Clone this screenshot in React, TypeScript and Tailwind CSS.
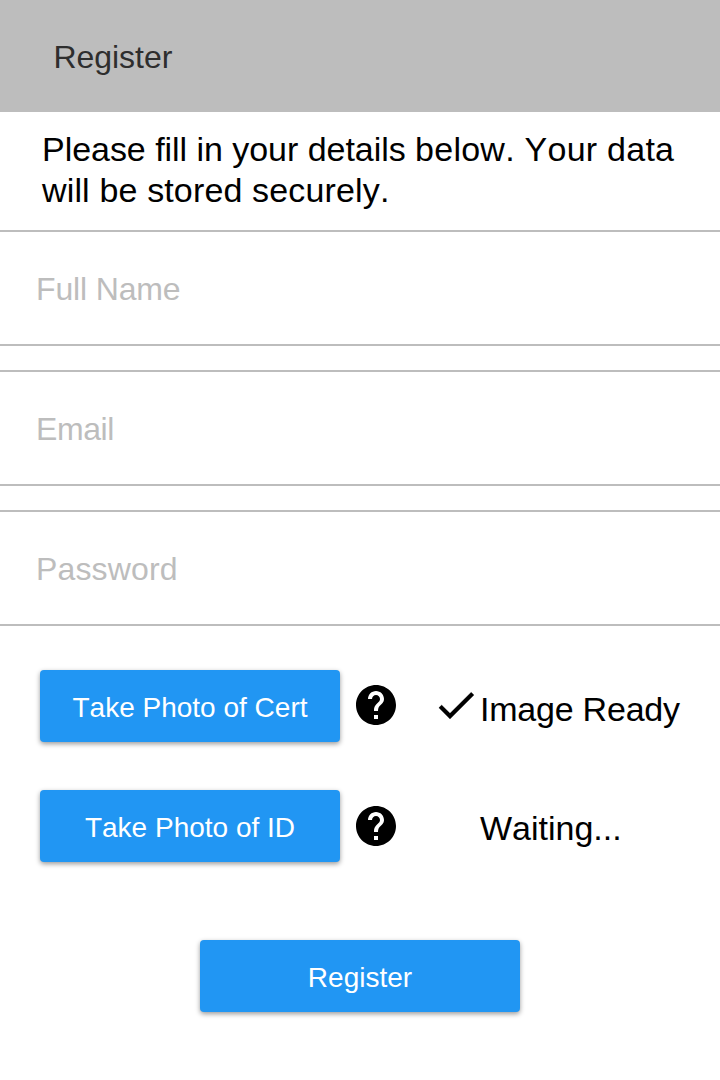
import React from "react";
import { MdHelp } from "react-icons/md";

function Field({ label, type, className }: { label: string; type: string; className: string }) {
  return (
    <input
      type={type}
      placeholder={label}
      className={`h-[116px] w-full border-y-2 border-[#bdbdbd] px-9 pt-0.5 text-[32px] placeholder:text-[#bdbdbd] outline-none ${className}`}
    />
  );
}

function Action({ label, className }: { label: string; className: string }) {
  return (
    <button className={`flex h-[72px] items-center justify-center rounded bg-[#2196f3] pt-1 text-[28px] whitespace-nowrap text-white shadow-[0_2px_5px_rgba(0,0,0,0.4)] ${className}`}>
      {label}
    </button>
  );
}

function Check({ className }: { className: string }) {
  return (
    <svg viewBox="0 0 24 24" fill="currentColor" stroke="currentColor" className={className}>
      <path strokeWidth="0.12" d="M9 16.17 4.83 12l-1.42 1.41L9 19 21 7l-1.41-1.41z" />
    </svg>
  );
}

export default function App() {
  return (
    <main className="h-[1080px] w-[720px] overflow-hidden bg-white font-['Liberation_Sans',sans-serif] text-black [font-kerning:none]">
      <header className="flex h-28 items-center bg-[#bdbdbd] pl-[53.5px] pt-0.5">
        <h1 className="text-[32px] tracking-[-0.05px] text-[#2e2e2e]">Register</h1>
      </header>
      <p className="h-[118px] pl-[42px] pt-[17px] text-[34px] leading-[41px] whitespace-nowrap">
        <span className="tracking-[-0.04px]">Please fill in your details </span>
        <span className="tracking-[0.25px]">below. Your data</span>
        <br />
        <span className="tracking-[0.15px]">will be stored securely.</span>
      </p>
      <form className="flex flex-col gap-6">
        <Field label="Full Name" type="text" className="tracking-[-0.15px]" />
        <Field label="Email" type="text" className="tracking-[-0.4px]" />
        <Field label="Password" type="password" className="tracking-[0.15px]" />
      </form>
      <section className="mt-11 flex flex-col gap-12 pl-10">
        <div className="flex h-[72px] items-center">
          <Action label="Take Photo of Cert" className="w-[300px]" />
          <MdHelp className="mb-0.5 ml-3 size-12" />
          <Check className="mb-0.5 ml-8 size-12" />
          <span className="mt-1.5 text-[34px] tracking-[-0.22px] whitespace-nowrap">Image Ready</span>
        </div>
        <div className="flex h-[72px] items-center">
          <Action label="Take Photo of ID" className="w-[300px]" />
          <MdHelp className="ml-3 size-12" />
          <span className="ml-20 mt-1 text-[34px]">Waiting...</span>
        </div>
      </section>
      <div className="mt-[78px] flex justify-center">
        <Action label="Register" className="w-80" />
      </div>
    </main>
  );
}
